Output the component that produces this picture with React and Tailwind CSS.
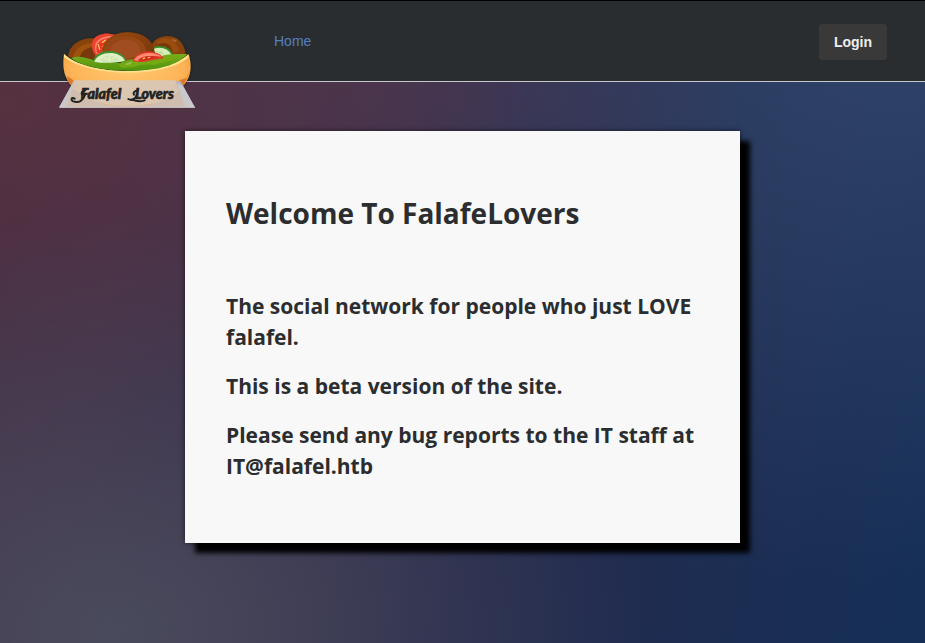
function Logo() {
  return (
    <svg viewBox="0 0 480 300" className="h-[100px] w-[160px]" role="img" aria-label="Falafel Lovers">
      <defs>
        <radialGradient id="bread" cx=".5" cy=".3" r=".65">
          <stop offset="0" stopColor="#ffc970" />
          <stop offset=".65" stopColor="#fdb558" />
          <stop offset="1" stopColor="#f39a38" />
        </radialGradient>
        <linearGradient id="salad" x1="0" y1="0" x2="0" y2="1">
          <stop offset="0" stopColor="#78ad1d" />
          <stop offset="1" stopColor="#4f930e" />
        </linearGradient>
        <linearGradient id="ball" x1="0" y1="0" x2="1" y2="1">
          <stop offset="0" stopColor="#9a4a0c" />
          <stop offset="1" stopColor="#743407" />
        </linearGradient>
        <filter id="soft" x="-10%" y="-10%" width="120%" height="120%">
          <feDropShadow dx="0" dy="2" stdDeviation="4" floodColor="#000" floodOpacity=".55" />
        </filter>
        <clipPath id="bowl">
          <path d="M42 102C110 170 350 170 416 102C432 160 412 184 388 210C356 244 300 258 230 258C160 258 98 236 70 204C44 174 36 150 42 102Z" />
        </clipPath>
      </defs>
      <g filter="url(#soft)">
        <path d="M54 112C56 74 92 52 134 55L160 120Z" fill="#8a430b" />
        <path d="M68 112C76 80 106 68 138 68L150 120Z" fill="#9e5210" />
        <path d="M88 116C92 92 110 80 140 80L150 124Z" fill="#78380a" />
        <path d="M306 72C326 38 400 34 407 104L390 124L318 112Z" fill="#87420b" />
        <path d="M318 66C340 44 378 54 388 94L350 104Z" fill="#9b4d10" />
        <path d="M322 75C342 60 368 73 369 99L330 100Z" fill="#78380b" />
        <path d="m368 57 12 4-2 6-14-7Z" fill="#a9683a" />
        <path d="M138 110C108 66 136 38 178 41L199 45L171 104Z" fill="#e9432f" />
        <path d="M139 101C124 68 148 47 188 48L171 100Z" fill="#ff8067" />
        <path d="M142 100C132 74 150 54 181 54L169 99Z" fill="#e63724" />
        <path d="m149 88-4-14m12-7 10-7m-8 20 10-5m-11 17 10-2" stroke="#ffc15b" strokeWidth="4" strokeLinecap="round" />
        <path d="M156 94C160 54 196 37 236 37C280 37 309 62 314 94L290 130L204 126Z" fill="url(#ball)" />
        <path d="M160 93C168 57 205 42 246 51C276 57 292 79 287 104L228 120Z" fill="#974719" />
        <path d="M180 96C185 70 209 57 236 60C262 63 276 81 269 105L222 119Z" fill="#a14e23" />
        <path d="M312 81C336 73 363 83 369 104L344 118L316 103Z" fill="#3b8c24" />
        <path d="M312 86C334 78 358 88 364 106L340 113L316 101Z" fill="#d8edb8" />
        <path d="m318 94 24 7m-8-10-2 16" stroke="#bcdb9a" strokeWidth="3" />
      </g>
      <path d="M42 102C110 170 350 170 416 102C432 160 412 184 388 210C356 244 300 258 230 258C160 258 98 236 70 204C44 174 36 150 42 102Z" fill="url(#bread)" filter="url(#soft)" />
      <g clipPath="url(#bowl)">
        <path d="M42 112C120 173 350 174 416 112L412 98H42Z" fill="#ffe28d" />
        <path d="M40 145Q52 202 109 204L77 240L30 180ZM419 150Q394 204 320 213L383 247L430 180Z" fill="#f49b3c" opacity=".7" />
        <path d="M50 168Q75 178 84 202L61 207ZM412 174Q373 182 367 204L394 208Z" fill="#df792a" />
      </g>
      <path d="M62 114C84 106 105 112 130 120C165 130 180 125 210 129C248 109 277 120 309 116C331 112 340 103 366 103C382 101 400 103 412 102C375 144 302 152 236 152C164 152 99 141 62 114Z" fill="url(#salad)" />
      <path d="M205 134C232 115 276 131 302 124C334 118 349 105 394 105C359 129 331 125 312 135C276 127 250 147 215 143Z" fill="#75aa13" />
      <path d="M130 122C138 84 218 83 229 124C196 130 162 132 130 122Z" fill="#3e902c" />
      <path d="M133 125C143 93 209 88 225 122C197 129 160 131 133 125Z" fill="#e0efc6" />
      <path d="M151 122C161 102 198 103 208 122C188 127 168 127 151 122Z" fill="#d0e8b2" />
      <path d="m163 114 14 7m1-13 1 14m14-10-9 9" stroke="#edf6da" strokeWidth="3" strokeLinecap="round" />
      <path d="M248 123C262 87 322 87 341 114L330 117C306 117 286 129 263 125Z" fill="#e93728" />
      <path d="M252 119C268 96 313 92 335 110C302 105 278 113 266 124Z" fill="#ff8b73" />
      <path d="M263 122C276 106 309 105 327 114C306 112 285 125 263 122Z" fill="#ce2c1e" />
      <path d="m278 117 7-4m8 1 8-3" stroke="#ffc15b" strokeWidth="4" />
      <path d="m225 132 22-9-4 9-13 4Z" fill="#93bd50" />
      <path d="M71 182L77 181L49 261H28ZM376 184H392L434 261H405Z" fill="#b9b5bb" />
      <path d="M73 181H375L408 261H43Z" fill="#d8c8b8" opacity=".93" />
      <path d="M43 261L73 181L57 211L28 261ZM380 190L408 261H434L399 199Z" fill="#c9c9cd" />
      <path d="M150 249Q235 267 314 249L298 257Q235 265 170 257Z" fill="#e2b887" opacity=".5" />
      <path d="M28 262H435" stroke="#d5d4d8" strokeWidth="3" />
      <g fill="#242323" stroke="#242323" strokeWidth="2" className="font-['Lato','Open_Sans',sans-serif] text-[43px] font-black italic">
        <text x="92" y="237">Falafel</text>
        <text x="255" y="237">Lovers</text>
      </g>
      <path d="M106 211Q91 215 96 224M106 223Q96 248 79 246Q63 245 65 236Q67 232 74 236M264 211Q246 215 252 224M262 223Q250 247 235 237M246 238Q264 248 284 241" fill="none" stroke="#242323" strokeWidth="6" strokeLinecap="round" />
    </svg>
  );
}

export default function App() {
  return (
    <div className="min-h-screen bg-[radial-gradient(ellipse_at_12%_98%,#4a4c5ef0_0%,#484c5e00_46%),radial-gradient(ellipse_at_0%_16%,#563140_0%,#56314000_40%),radial-gradient(ellipse_at_35%_0%,#4a3750_0%,#4a375000_50%),radial-gradient(ellipse_at_100%_0%,#314469_0%,#31446900_65%),linear-gradient(100deg,#452e44_0%,#432f46_15%,#262a4c_54%,#152f57_100%)] font-['Open_Sans',sans-serif] text-[#2b2d2f]">
      <header className="relative flex h-[82px] items-start justify-between border-t border-b border-t-black border-b-[#c8c8cc] bg-[#292d2f] pr-[38px] pl-[274px] font-['Liberation_Sans',sans-serif]">
        <a href="#" className="absolute top-[19px] left-[50px]"><Logo /></a>
        <nav className="pt-[30px]">
          <a href="#" className="block text-sm leading-5 text-[#5480c0]">Home</a>
        </nav>
        <button type="button" className="mt-[23px] h-9 rounded-[3px] bg-[#39393a] px-[15px] text-sm font-bold text-[#eeeeee]">Login</button>
      </header>
      <main className="pt-[49px] pb-[100px]">
        <section className="mx-auto w-3/5 min-w-[280px] bg-[#f8f8f8] px-[41px] py-[61px] shadow-[10px_10px_5px_0px_#000,0_0_5px_#0009]">
          <h1 className="mb-[57px] text-[28px] leading-[42px] font-bold">Welcome To FalafeLovers</h1>
          <div className="space-y-[18px] text-[21px] leading-[31px] font-bold">
            <p>The social network for people who just LOVE falafel.</p>
            <p>This is a beta version of the site.</p>
            <p>Please send any bug reports to the IT staff at IT@falafel.htb</p>
          </div>
        </section>
      </main>
    </div>
  );
}
